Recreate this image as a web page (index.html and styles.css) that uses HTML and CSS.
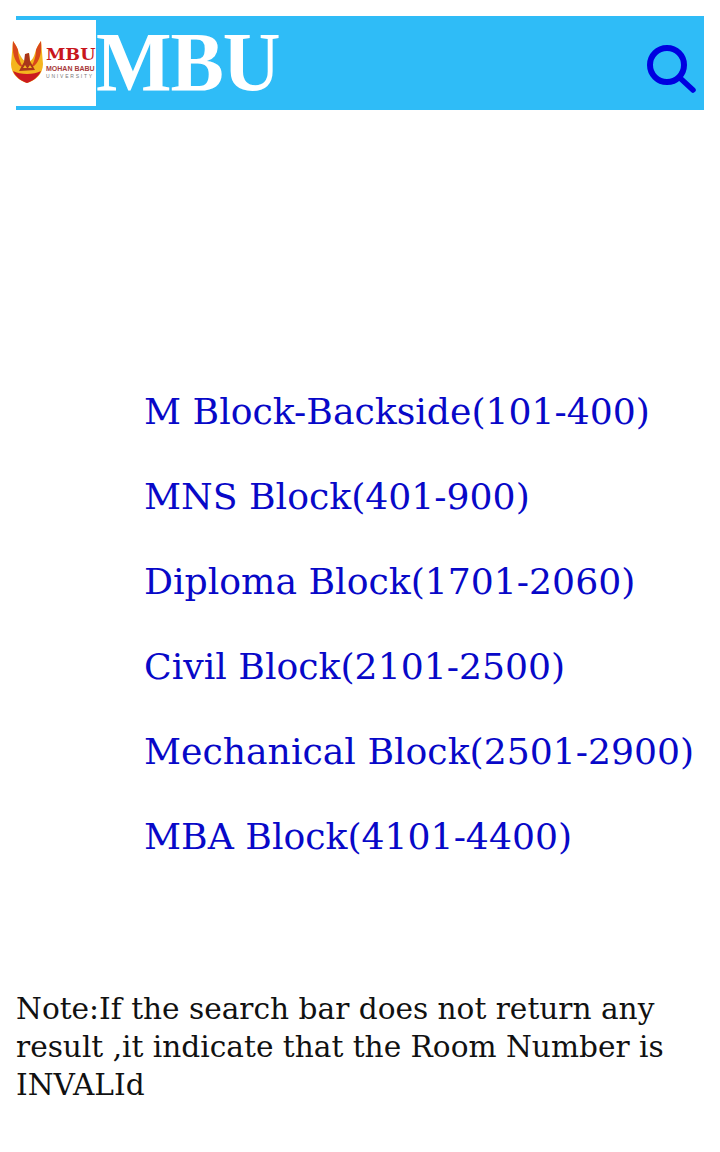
FILE: index.html
```html
<!DOCTYPE html>
<html lang="en">
<head>
    <meta charset="UTF-8">
    <meta name="viewport" content="width=device-width, initial-scale=1.0">
    <title>MBU</title>
    <link rel="stylesheet" href="styles.css">
</head>
<body>
    <div class="header">
        <div class="logo">
            <svg class="logo-crest" viewBox="0 0 32 44" width="32" height="44">
                <path d="M2 1 C5 5 7 9 8 13 C10 17 12 20 14 21 L15 14 L18 13 L19 21 C21 20 23 17 24 13 C25 9 27 5 30 1 L32 24 C32 34 24 41 16 43 C8 41 0 34 0 24 Z" fill="#f4b51f"/>
                <path d="M2 1 C1 12 3 21 9 26 L12 27 C8 21 7 14 7 10 C6 7 4 4 2 1 Z M30 1 C31 12 29 21 23 26 L20 27 C24 21 25 14 25 10 C26 7 28 4 30 1 Z" fill="#d9471b"/>
                <path d="M2 31 C9 35 23 35 30 31 C27 38 21 41 16 43 C11 41 5 38 2 31 Z" fill="#cb1a1f"/>
                <path d="M14 14 L18 13 L19 21 L24 30 L8 31 L13 22 Z" fill="#a9351a"/>
                <path d="M12 28 L14 25 L16 28 Z M17 28 L19 25 L21 28 Z" fill="#f4b51f"/>
            </svg>
            <div class="logo-text">
                <span class="logo-name">MBU</span>
                <span class="logo-full">MOHAN BABU</span>
                <span class="logo-uni">UNIVERSITY</span>
            </div>
        </div>
        <h1>MBU</h1>
        <svg class="search-icon" viewBox="0 0 50 50" width="50" height="50">
            <circle cx="20" cy="20" r="17" fill="none" stroke="#0000e0" stroke-width="6"/>
            <path d="M33 33 L46 45" fill="none" stroke="#0000e0" stroke-width="5.5" stroke-linecap="round"/>
        </svg>
    </div>

    <ul class="blocks">
        <li><a href="#">M Block-Backside(101-400)</a></li>
        <li><a href="#">MNS Block(401-900)</a></li>
        <li><a href="#">Diploma Block(1701-2060)</a></li>
        <li><a href="#">Civil Block(2101-2500)</a></li>
        <li><a href="#">Mechanical Block(2501-2900)</a></li>
        <li><a href="#">MBA Block(4101-4400)</a></li>
    </ul>

    <p class="note">Note:If the search bar does not return any result ,it indicate that the Room Number is INVALId</p>
</body>
</html>
```

FILE: styles.css
```css
body {
    margin: 0;
    padding: 16px 16px 0;
    background-color: #fff;
    font-family: 'DejaVu Serif', 'Liberation Serif', serif;
}

.header {
    display: flex;
    align-items: flex-start;
    height: 94px;
    background-color: #2fbcf7;
}

.logo {
    display: flex;
    align-items: center;
    gap: 3px;
    flex: none;
    width: 80px;
    height: 86px;
    margin-top: 4px;
    background-color: #fff;
}

.logo-crest {
    flex: none;
    margin-left: -5px;
    margin-top: -2px;
}

.logo-text {
    display: flex;
    flex-direction: column;
    width: 50px;
    margin-top: -3px;
    color: #c8161d;
    font-family: 'Liberation Sans', sans-serif;
    white-space: nowrap;
}

.logo-name {
    font-family: 'DejaVu Serif', serif;
    font-size: 17.5px;
    line-height: 19px;
    font-weight: bold;
}

.logo-full {
    font-size: 7px;
    line-height: 9px;
    font-weight: bold;
    color: #a83a3a;
}

.logo-uni {
    font-size: 5px;
    line-height: 6px;
    letter-spacing: 1.8px;
    color: #777;
}

h1 {
    margin: 0;
    font-family: 'Liberation Serif', serif;
    font-size: 80px;
    line-height: 92px;
    font-weight: bold;
    color: #fff;
    letter-spacing: -1px;
    transform: scaleY(1.07);
}

.search-icon {
    margin: 29px 7px 0 auto;
}

.blocks {
    list-style: none;
    margin: 259px 0 0;
    padding: 0 0 0 128px;
}

.blocks li {
    height: 85px;
    font-size: 36.2px;
    line-height: 85px;
    white-space: nowrap;
}

.blocks a {
    color: #0808c8;
    text-decoration: none;
}

.note {
    margin: 111px 0 0;
    font-size: 29.6px;
    line-height: 38px;
    color: #111;
}
```
